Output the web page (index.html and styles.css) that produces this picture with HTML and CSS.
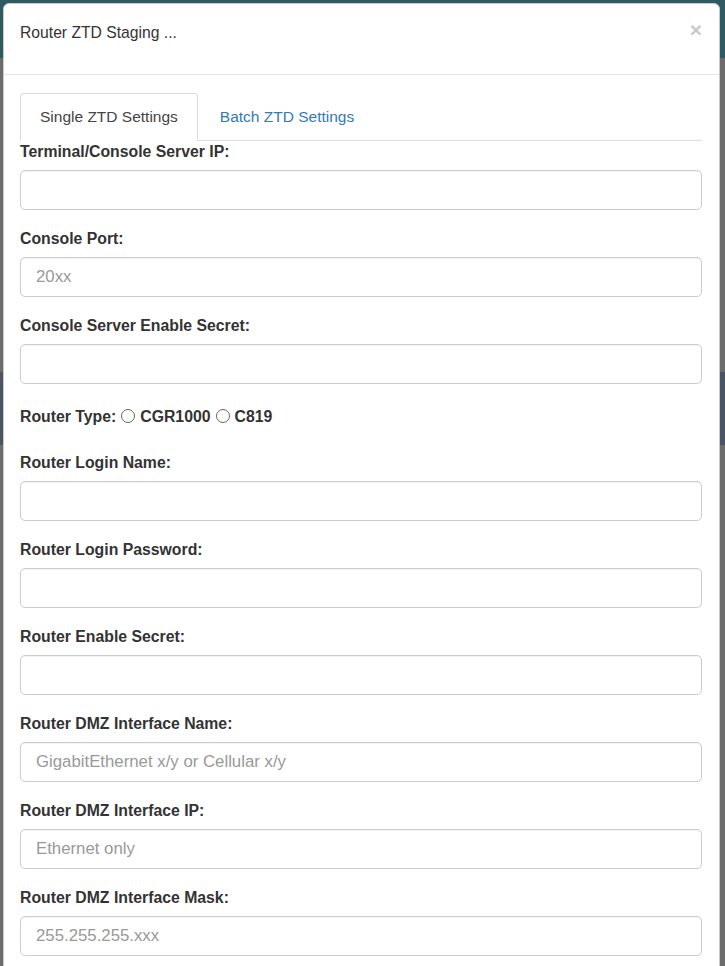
FILE: index.html
```html
<!DOCTYPE html>
<html lang="en">
  <head>
    <meta charset="UTF-8" />
    <meta name="viewport" content="width=device-width, initial-scale=1.0" />
    <title>Router ZTD Staging</title>
    <link rel="stylesheet" href="styles.css">
  </head>
  <body>
    <div class="modal">
      <div class="modal-header">
        <button type="button" class="close">&times;</button>
        <h4 class="modal-title">Router ZTD Staging ...</h4>
      </div>

      <div class="modal-body">
        <ul class="nav-tabs">
          <li class="active"><a href="#single">Single ZTD Settings</a></li>
          <li><a href="#batch">Batch ZTD Settings</a></li>
        </ul>

        <form id="single">
          <div class="form-group">
            <label for="ts_ip">Terminal/Console Server IP:</label>
            <input type="text" id="ts_ip" class="form-control" />
          </div>
          <div class="form-group">
            <label for="ts_port">Console Port:</label>
            <input type="text" id="ts_port" class="form-control" placeholder="20xx" />
          </div>
          <div class="form-group">
            <label for="ts_secret">Console Server Enable Secret:</label>
            <input type="password" id="ts_secret" class="form-control" />
          </div>
          <div class="radio-group">
            <label>Router Type:</label>
            <label class="radio-item"><input type="radio" name="router_type" value="CGR1000" /> CGR1000</label>
            <label class="radio-item"><input type="radio" name="router_type" value="C819" /> C819</label>
          </div>
          <div class="form-group">
            <label for="r_user">Router Login Name:</label>
            <input type="text" id="r_user" class="form-control" />
          </div>
          <div class="form-group">
            <label for="r_pass">Router Login Password:</label>
            <input type="password" id="r_pass" class="form-control" />
          </div>
          <div class="form-group">
            <label for="r_secret">Router Enable Secret:</label>
            <input type="password" id="r_secret" class="form-control" />
          </div>
          <div class="form-group">
            <label for="dmz_name">Router DMZ Interface Name:</label>
            <input type="text" id="dmz_name" class="form-control" placeholder="GigabitEthernet x/y or Cellular x/y" />
          </div>
          <div class="form-group">
            <label for="dmz_ip">Router DMZ Interface IP:</label>
            <input type="text" id="dmz_ip" class="form-control" placeholder="Ethernet only" />
          </div>
          <div class="form-group">
            <label for="dmz_mask">Router DMZ Interface Mask:</label>
            <input type="text" id="dmz_mask" class="form-control" placeholder="255.255.255.xxx" />
          </div>
        </form>
      </div>
    </div>
  </body>
</html>
```

FILE: styles.css
```css
html,
body {
  height: 100%;
}
body {
  margin: 0;
  overflow: hidden;
  font-family: "Liberation Sans", Arial, sans-serif;
  color: #333;
  background: linear-gradient(
    to bottom,
    #2d5a63 0,
    #2d5a63 58px,
    #6c6c6c 58px,
    #6c6c6c 372px,
    #4a5462 372px,
    #4a5462 445px,
    #6c6c6c 445px
  );
}
.modal {
  margin: 3px 5px 0 3px;
  background: #fff;
  border: 1px solid #c9c9c9;
  border-radius: 6px;
  min-height: 1000px;
}
.modal-header {
  padding: 18px 17px 30px 16px;
  border-bottom: 1px solid #e5e5e5;
}
.modal-title {
  margin: 0;
  font-size: 15.7px;
  font-weight: normal;
  line-height: 22px;
  color: #333;
}
.close {
  float: right;
  margin-top: -3px;
  padding: 0;
  border: 0;
  background: transparent;
  font-family: "Liberation Sans", Arial, sans-serif;
  font-size: 21px;
  font-weight: bold;
  line-height: 22px;
  color: #c8c8c8;
  cursor: pointer;
}
.modal-body {
  padding: 18px 17px 16px 16px;
}
.nav-tabs {
  display: flex;
  margin: 0 0 1px;
  padding: 0;
  list-style: none;
  border-bottom: 1px solid #ddd;
}
.nav-tabs li {
  margin: 0 2px -1px 0;
}
.nav-tabs a {
  display: block;
  padding: 12px 19px;
  font-size: 15.5px;
  line-height: 22px;
  color: #337ab7;
  text-decoration: none;
  border: 1px solid transparent;
  border-radius: 4px 4px 0 0;
}
.nav-tabs .active a {
  color: #444;
  background: #fff;
  border-color: #ddd #ddd transparent;
}
.form-group {
  margin-bottom: 19px;
}
label {
  display: block;
  margin-bottom: 8px;
  font-size: 15.8px;
  font-weight: bold;
  line-height: 20px;
}
.form-control {
  display: block;
  width: 100%;
  height: 40px;
  box-sizing: border-box;
  padding: 6px 15px;
  font-family: "Liberation Sans", Arial, sans-serif;
  font-size: 16.8px;
  color: #555;
  background: #fff;
  border: 1px solid #ccc;
  border-radius: 5px;
  box-shadow: inset 0 1px 1px rgba(0, 0, 0, 0.05);
}
.form-control::placeholder {
  color: #999;
}
.radio-group {
  display: flex;
  align-items: center;
  gap: 5px;
  margin: 23px 0 26px;
}
.radio-group label {
  margin: 0;
}
.radio-item {
  display: flex;
  align-items: center;
  gap: 5px;
}
.radio-item input {
  appearance: none;
  width: 14px;
  height: 14px;
  margin: 0 0 3px;
  border: 1px solid #666;
  border-radius: 50%;
  background: #fff;
}
```
